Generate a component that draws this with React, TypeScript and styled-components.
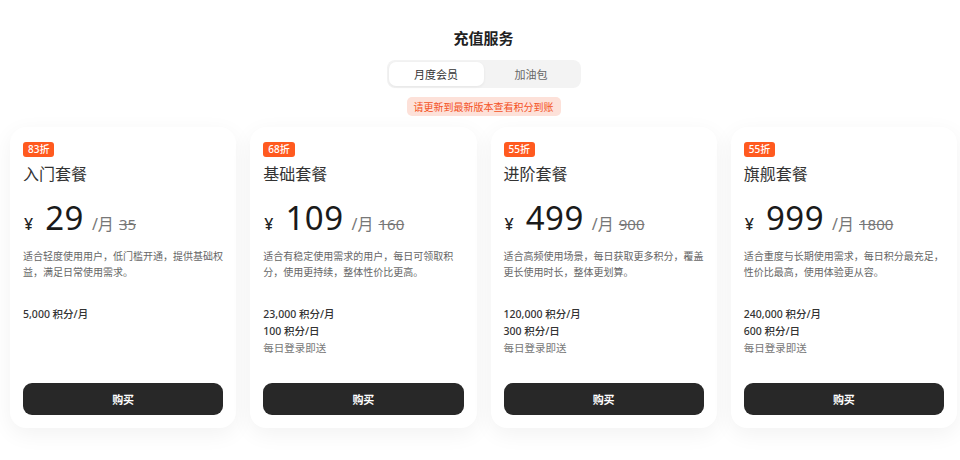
import React from "react";
import styled, { createGlobalStyle } from "styled-components";

const Global = createGlobalStyle`
  html, body { margin: 0; padding: 0; background: #ffffff; overflow: hidden; }
  body { font-family: "Noto Sans", "Noto Sans CJK SC", sans-serif; color: #222; }
  * { box-sizing: border-box; }
`;

const Page = styled.div`
  width: 967px;
  height: 460px;
  overflow: hidden;
  display: flex;
  flex-direction: column;
  align-items: center;
  padding-top: 27px;
`;

const Title = styled.h1`
  margin: 0;
  font-size: 15px;
  line-height: 22px;
  font-weight: 700;
  color: #222;
`;

const Tabs = styled.div`
  margin-top: 11px;
  width: 194px;
  height: 28px;
  padding: 2px;
  border-radius: 8px;
  background: #f3f3f3;
  display: grid;
  grid-template-columns: 1fr 1fr;
`;

const Tab = styled.div<{ $active?: boolean }>`
  display: flex;
  align-items: center;
  justify-content: center;
  border-radius: 7px;
  font-size: 11px;
  color: ${(p) => (p.$active ? "#333" : "#666")};
  background: ${(p) => (p.$active ? "#fff" : "transparent")};
  box-shadow: ${(p) => (p.$active ? "0 1px 3px rgba(0,0,0,0.06)" : "none")};
`;

const Notice = styled.div`
  margin-top: 9px;
  height: 19px;
  padding: 0 7px;
  border-radius: 5px;
  background: #fde1d9;
  color: #f4511e;
  font-size: 10px;
  display: flex;
  align-items: center;
`;

const Grid = styled.div`
  margin-top: 11px;
  align-self: stretch;
  display: grid;
  grid-template-columns: repeat(4, 1fr);
  gap: 14px;
  padding: 0 10px;
`;

const Card = styled.div`
  height: 301px;
  border-radius: 16px;
  background: #fff;
  box-shadow: 0 6px 22px rgba(0, 0, 0, 0.055);
  padding: 15px 13px 13px 13px;
  display: flex;
  flex-direction: column;
`;

const Badge = styled.span`
  align-self: flex-start;
  height: 15px;
  padding: 0 5px;
  border-radius: 3px;
  background: #ff5a1f;
  color: #fff;
  font-size: 10px;
  font-weight: 500;
  line-height: 15px;
`;

const PlanName = styled.div`
  margin-top: 6px;
  font-size: 16px;
  line-height: 22px;
  color: #333;
`;

const PriceRow = styled.div`
  margin-top: 10px;
  display: flex;
  align-items: baseline;
  height: 42px;
`;

const Yen = styled.span`
  font-size: 16px;
  font-weight: 500;
  color: #222;
  margin-left: 1px;
`;

const Amount = styled.span`
  font-size: 33px;
  color: #1a1a1a;
  margin-left: 12px;
  letter-spacing: 0.5px;
`;

const Per = styled.span`
  font-size: 16px;
  color: #777;
  margin-left: 8px;
`;

const Original = styled.span`
  font-size: 15px;
  color: #777;
  margin-left: 5px;
  text-decoration: line-through;
`;

const Desc = styled.p`
  margin: 11px 0 0;
  font-size: 10px;
  line-height: 16px;
  color: #666;
  height: 48px;
`;

const Features = styled.div`
  margin-top: 10px;
  display: flex;
  flex-direction: column;
`;

const Feature = styled.div<{ $muted?: boolean }>`
  font-size: 10.5px;
  line-height: 17px;
  color: ${(p) => (p.$muted ? "#777" : "#333")};
  font-weight: ${(p) => (p.$muted ? 400 : 500)};
`;

const BuyButton = styled.button`
  margin-top: auto;
  height: 32px;
  border: none;
  border-radius: 9px;
  background: #282828;
  color: #fff;
  font-family: inherit;
  font-size: 11px;
  font-weight: 700;
  cursor: pointer;
`;

type Plan = {
  badge: string;
  name: string;
  price: string;
  original: string;
  desc: string;
  features: { text: string; muted?: boolean }[];
};

const plans: Plan[] = [
  {
    badge: "83折",
    name: "入门套餐",
    price: "29",
    original: "35",
    desc: "适合轻度使用用户，低门槛开通，提供基础权益，满足日常使用需求。",
    features: [{ text: "5,000 积分/月" }],
  },
  {
    badge: "68折",
    name: "基础套餐",
    price: "109",
    original: "160",
    desc: "适合有稳定使用需求的用户，每日可领取积分，使用更持续，整体性价比更高。",
    features: [
      { text: "23,000 积分/月" },
      { text: "100 积分/日" },
      { text: "每日登录即送", muted: true },
    ],
  },
  {
    badge: "55折",
    name: "进阶套餐",
    price: "499",
    original: "900",
    desc: "适合高频使用场景，每日获取更多积分，覆盖更长使用时长，整体更划算。",
    features: [
      { text: "120,000 积分/月" },
      { text: "300 积分/日" },
      { text: "每日登录即送", muted: true },
    ],
  },
  {
    badge: "55折",
    name: "旗舰套餐",
    price: "999",
    original: "1800",
    desc: "适合重度与长期使用需求，每日积分最充足，性价比最高，使用体验更从容。",
    features: [
      { text: "240,000 积分/月" },
      { text: "600 积分/日" },
      { text: "每日登录即送", muted: true },
    ],
  },
];

export default function App() {
  return (
    <>
      <Global />
      <Page>
        <Title>充值服务</Title>
        <Tabs>
          <Tab $active>月度会员</Tab>
          <Tab>加油包</Tab>
        </Tabs>
        <Notice>请更新到最新版本查看积分到账</Notice>
        <Grid>
          {plans.map((p) => (
            <Card key={p.name}>
              <Badge>{p.badge}</Badge>
              <PlanName>{p.name}</PlanName>
              <PriceRow>
                <Yen>¥</Yen>
                <Amount>{p.price}</Amount>
                <Per>/月</Per>
                <Original>{p.original}</Original>
              </PriceRow>
              <Desc>{p.desc}</Desc>
              <Features>
                {p.features.map((f) => (
                  <Feature key={f.text} $muted={f.muted}>
                    {f.text}
                  </Feature>
                ))}
              </Features>
              <BuyButton>购买</BuyButton>
            </Card>
          ))}
        </Grid>
      </Page>
    </>
  );
}
